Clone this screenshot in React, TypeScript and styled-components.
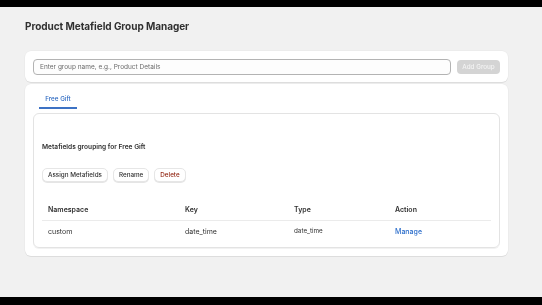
import styled, { createGlobalStyle } from 'styled-components';

const GlobalStyle = createGlobalStyle`
  html, body {
    margin: 0;
    padding: 0;
    background: #000;
  }
  body {
    font-family: Inter, "Noto Sans", "Liberation Sans", sans-serif;
    color: #303030;
    -webkit-font-smoothing: antialiased;
  }
  * {
    box-sizing: border-box;
  }
`;

const Screen = styled.div`
  display: flex;
  flex-direction: column;
  width: 542px;
  height: 305px;
  background: #000;
`;

const LetterBox = styled.div<{ h: number }>`
  height: ${({ h }) => h}px;
  flex: none;
  background: #000;
`;

// own layer so small text gets greyscale antialiasing
const Page = styled.main`
  flex: none;
  height: 290px;
  background: #f1f1f1;
  padding: 12px 34px 0 25px;
  display: flex;
  flex-direction: column;
  will-change: transform;
`;

const Title = styled.h1`
  margin: 0 0 18px;
  font-size: 10px;
  line-height: 14px;
  font-weight: 700;
  color: #303030;
  letter-spacing: -0.05px;
`;

const Card = styled.section`
  background: #fff;
  border-radius: 6px;
  box-shadow: 0 1px 0 0 rgba(26, 26, 26, 0.07), 0 0 0 0.5px rgba(0, 0, 0, 0.04);
`;

const AddBar = styled(Card)`
  display: flex;
  align-items: center;
  gap: 6px;
  height: 31px;
  padding: 0 8px;
  margin-bottom: 2px;
`;

const TextInput = styled.input`
  flex: 1;
  height: 16px;
  border: 0.8px solid #b3b3b3;
  border-radius: 4px;
  padding: 0 6px;
  font-family: inherit;
  font-size: 6.5px;
  color: #303030;
  background: #fdfdfd;
  outline: none;

  &::placeholder {
    color: #6b6b6b;
  }
`;

const AddButton = styled.button`
  width: 43px;
  height: 14px;
  border: none;
  border-radius: 4px;
  background: #d4d4d4;
  color: #f4f4f4;
  font-family: inherit;
  font-size: 6.3px;
  font-weight: 500;
  padding: 0;
`;

const GroupsCard = styled(Card)`
  padding: 8px 8px 8px;
  display: flex;
  flex-direction: column;
`;

const TabList = styled.div`
  display: flex;
  padding-left: 6px;
  height: 17px;
  margin-bottom: 4px;
`;

const Tab = styled.button<{ active?: boolean }>`
  border: none;
  background: none;
  padding: 0 6px 1px;
  width: 38px;
  font-family: inherit;
  font-size: 6.3px;
  font-weight: 500;
  color: ${({ active }) => (active ? '#2f6bc2' : '#616161')};
  border-bottom: 2px solid ${({ active }) => (active ? '#3d72c4' : 'transparent')};
`;

const GroupPanel = styled.div`
  border: 0.8px solid #e3e3e3;
  border-radius: 6px;
  padding: 28px 8px 6px;
  box-shadow: 0 1px 0 0 rgba(26, 26, 26, 0.06);
`;

const PanelHeading = styled.h2`
  margin: 0 0 16px;
  font-size: 6.6px;
  line-height: 10px;
  font-weight: 600;
  color: #303030;
`;

const ButtonRow = styled.div`
  display: flex;
  gap: 5px;
  margin-bottom: 16px;
`;

const SecondaryButton = styled.button<{ tone?: 'critical' }>`
  height: 14px;
  padding: 0 5px;
  border: 0.6px solid #e6e6e6;
  border-radius: 5px;
  background: #fff;
  box-shadow: 0 1px 0 0 rgba(0, 0, 0, 0.1);
  font-family: inherit;
  font-size: 6.3px;
  font-weight: 500;
  color: ${({ tone }) => (tone === 'critical' ? '#8e1f0b' : '#303030')};
`;

const Table = styled.div`
  display: grid;
  grid-template-columns: 137px 109px 101px 1fr;
`;

const HeadCell = styled.div`
  height: 23px;
  display: flex;
  align-items: center;
  padding-left: 6px;
  font-size: 7px;
  font-weight: 600;
  color: #303030;
  border-bottom: 0.8px solid #ebebeb;
`;

const Cell = styled.div<{ small?: boolean }>`
  height: 20px;
  display: flex;
  align-items: center;
  padding-left: 6px;
  font-size: ${({ small }) => (small ? '6.3px' : '7px')};
  color: #303030;
`;

const ManageLink = styled.a`
  color: #2c6ecb;
  font-weight: 500;
  text-decoration: none;
  cursor: pointer;
`;

const rows = [{ namespace: 'custom', key: 'date_time', type: 'date_time' }];

export default function App() {
  return (
    <>
      <GlobalStyle />
      <Screen>
        <LetterBox h={7} />
        <Page>
          <Title>Product Metafield Group Manager</Title>
          <AddBar>
            <TextInput placeholder="Enter group name, e.g., Product Details" />
            <AddButton disabled>Add Group</AddButton>
          </AddBar>
          <GroupsCard>
            <TabList>
              <Tab active>Free Gift</Tab>
            </TabList>
            <GroupPanel>
              <PanelHeading>Metafields grouping for Free Gift</PanelHeading>
              <ButtonRow>
                <SecondaryButton>Assign Metafields</SecondaryButton>
                <SecondaryButton>Rename</SecondaryButton>
                <SecondaryButton tone="critical">Delete</SecondaryButton>
              </ButtonRow>
              <Table>
                <HeadCell>Namespace</HeadCell>
                <HeadCell>Key</HeadCell>
                <HeadCell>Type</HeadCell>
                <HeadCell>Action</HeadCell>
                {rows.map(r => (
                  <>
                    <Cell>{r.namespace}</Cell>
                    <Cell>{r.key}</Cell>
                    <Cell small>{r.type}</Cell>
                    <Cell>
                      <ManageLink>Manage</ManageLink>
                    </Cell>
                  </>
                ))}
              </Table>
            </GroupPanel>
          </GroupsCard>
        </Page>
        <LetterBox h={8} />
      </Screen>
    </>
  );
}
